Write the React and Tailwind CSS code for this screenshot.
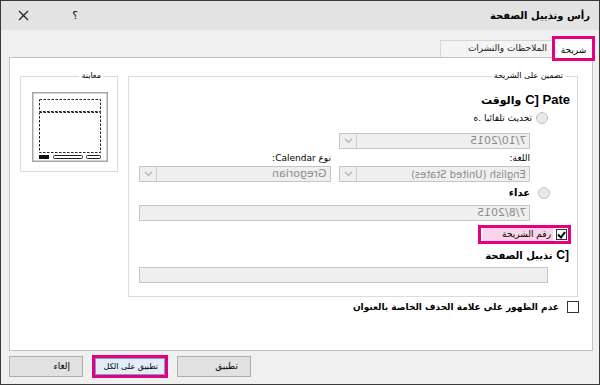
import React from 'react'

function Chevron() {
  return (
    <svg width="9" height="6" viewBox="0 0 9 6">
      <polyline points="1,1 4.5,4.5 8,1" fill="none" stroke="#b4b4b4" strokeWidth="1.2" />
    </svg>
  )
}

function Mirror({ children }) {
  return <span className="inline-block -scale-x-100 whitespace-nowrap">{children}</span>
}

function Combo({ value, className, textSize = 'text-[11px]' }) {
  return (
    <div className={`flex h-[16px] border border-[#c6c6c6] bg-[#efefef] ${className}`}>
      <div className={`flex flex-1 items-center justify-start pr-[3px] text-[#8c8c8c] ${textSize}`}>
        <Mirror>{value}</Mirror>
      </div>
      <div className="flex w-[17px] items-center justify-center border-r border-[#d0d0d0]">
        <Chevron />
      </div>
    </div>
  )
}

function Radio() {
  return <span className="block h-[12px] w-[12px] shrink-0 rounded-full border border-[#c2c2c2] bg-[#e9e9e9]" />
}

function PreviewDrawing() {
  return (
    <svg width="76" height="70" viewBox="0 0 76 70">
      <rect x="0.75" y="0.75" width="74.5" height="68.5" fill="#fff" stroke="#a6a6a6" strokeWidth="1.5" />
      <rect x="7.5" y="7.5" width="61" height="12" fill="none" stroke="#222" strokeWidth="1" strokeDasharray="2.5,1.5" />
      <rect x="7.5" y="20.5" width="61" height="40" fill="none" stroke="#222" strokeWidth="1" strokeDasharray="2.5,1.5" />
      <rect x="7" y="63" width="10" height="4" fill="#111" />
      <rect x="21.5" y="63.5" width="29" height="3" rx="1" fill="none" stroke="#222" strokeWidth="1" />
      <rect x="54.5" y="63.5" width="14" height="3" rx="1" fill="none" stroke="#222" strokeWidth="1" />
    </svg>
  )
}

export default function App() {
  return (
    <div className="flex h-[385px] w-[600px] flex-col overflow-hidden border border-[#3a3a3a] bg-[#f0f0f0] font-['DejaVu_Sans',sans-serif] text-[11px] text-black">
      {/* title bar */}
      <div className="flex h-[29px] items-center justify-between bg-[#e3e3e3] pl-[17px] pr-[9px]">
        <div className="flex w-[60px] items-center justify-between">
          <svg width="11" height="11" viewBox="0 0 11 11">
            <path d="M1 1L10 10M10 1L1 10" stroke="#222" strokeWidth="1.3" />
          </svg>
          <span className="text-[11px] leading-none">؟</span>
        </div>
        <div dir="rtl" className="text-[10px] font-bold">رأس وتذييل الصفحة</div>
      </div>

      <div className="flex flex-1 flex-col pl-[8px] pr-[6px]">
        {/* tabs */}
        <div className="relative z-10 flex h-[27px] items-end justify-end">
          <div dir="rtl" className="flex h-[17px] w-[113px] items-center border border-b-0 border-[#d6d6d6] bg-[#f4f4f4] pr-[5px] text-[9px] text-[#222]">
            الملاحظات والنشرات
          </div>
          <div dir="rtl" className="-mb-[4px] -ml-[1px] -mr-[2px] flex h-[25px] w-[43px] items-start justify-center border-[3px] border-[#e5007d] bg-white pt-[5px] text-[9px]">
            شريحة
          </div>
        </div>

        {/* panel */}
        <div className="flex h-[294px] flex-col border border-[#c4c4c4] bg-white pl-[10px] pr-[13px] pt-[12px]">
          <div className="flex gap-[10px]">
            <fieldset dir="rtl" className="h-[102px] w-[98px] border border-[#dcdcdc] pl-[11px] pr-[9px]">
              <legend className="mr-[5px] px-[2px] text-[8px] leading-[12px]">معاينة</legend>
              <div className="mt-[10px]">
                <PreviewDrawing />
              </div>
            </fieldset>

            <fieldset dir="rtl" className="h-[227px] w-[450px] border border-[#dcdcdc] pl-[9px] pr-[7px]">
              <legend className="mr-[5px] px-[2px] text-[8px] leading-[12px]">تضمين على الشريحة</legend>
              <div className="flex flex-col items-start">
                <div dir="ltr" className="mt-[10px] h-[16px] whitespace-nowrap font-bold leading-[16px]">
                  <span className="text-[11px]">والوقت</span>{' '}
                  <span className="font-['Liberation_Sans',sans-serif] text-[13px]">C] Pate</span>
                </div>

                <div className="mt-[4px] flex h-[12px] items-center">
                  <span className="w-[22px]" />
                  <Radio />
                  <span className="w-[4px]" />
                  <span className="text-[9px] leading-[12px]">تحديث تلقائيا .ه</span>
                </div>

                <Combo value="7/10/2015" className="mt-[9px] mr-[40px] w-[191px]" />

                <div className="mt-[3px] flex h-[12px] items-center">
                  <span className="w-[40px]" />
                  <span className="w-[191px] text-[9px] leading-[12px]">اللغة:</span>
                  <span className="w-[8px]" />
                  <span className="text-[9px] leading-[12px]">نوع Calendar:</span>
                </div>

                <div className="mt-[2px] flex gap-[8px] mr-[40px]">
                  <Combo value="English (United States)" className="w-[191px]" textSize="text-[10px]" />
                  <Combo value="Gregorian" className="w-[192px]" />
                </div>

                <div className="mt-[5px] flex h-[12px] items-center">
                  <span className="w-[20px]" />
                  <Radio />
                  <span className="w-[8px]" />
                  <span className="text-[10px] font-bold leading-[12px]">عداء</span>
                </div>

                <div className="mt-[6px] mr-[40px] flex h-[16px] w-[391px] items-center border border-[#c6c6c6] bg-[#efefef] pr-[3px] text-[11px] text-[#8c8c8c]">
                  <Mirror>7/8/2015</Mirror>
                </div>

                <div className="mt-[4px] -mr-[1px] flex h-[19px] w-[93px] items-center border-[3px] border-[#e5007d] bg-white">
                  <div className="mr-[1px] flex h-[11px] w-[11px] items-center justify-center border border-[#333] bg-white">
                    <svg width="9" height="8" viewBox="0 0 9 8">
                      <polyline points="1,3.5 4,6.5 8,1" fill="none" stroke="#000" strokeWidth="2" />
                    </svg>
                  </div>
                  <div className="ml-[2px] mr-[3px] flex h-full flex-1 items-center bg-[#fbd3ea] pr-[2px] text-[9px] leading-none">
                    رقم الشريحة
                  </div>
                </div>

                <div dir="ltr" className="mt-[4px] mr-[1px] h-[14px] whitespace-nowrap font-bold leading-[14px]">
                  <span className="text-[10px]">تذييل الصفحة</span>{' '}
                  <span className="font-['Liberation_Sans',sans-serif] text-[12px]">C]</span>
                </div>

                <div className="mt-[5px] mr-[22px] h-[16px] w-[409px] border border-[#c6c6c6] bg-[#efefef]" />
              </div>
            </fieldset>
          </div>

          <div dir="rtl" className="mt-[3px] flex items-center">
            <span className="block h-[12px] w-[12px] border border-[#333] bg-white" />
            <span className="w-[8px]" />
            <span className="text-[9px] font-bold leading-[14px]">عدم الظهور على علامة الحذف الخاصة بالعنوان</span>
          </div>
        </div>

        {/* buttons */}
        <div dir="ltr" className="mt-[4px] flex items-center gap-[9px]">
          <button className="flex h-[21px] w-[74px] items-center justify-end border border-[#adadad] bg-[#e1e1e1] pr-[12px] text-[9px]">
            إلغاء
          </button>
          <div className="flex h-[23px] w-[76px] border-[3px] border-[#e5007d]">
            <button className="flex flex-1 items-center justify-end whitespace-nowrap border border-[#7a9fc9] bg-[#e3edf7] pr-[6px] text-[8px]">
              تطبيق على الكل
            </button>
          </div>
          <button className="flex h-[21px] w-[74px] items-center justify-end border border-[#adadad] bg-[#e1e1e1] pr-[12px] text-[9px]">
            تطبيق
          </button>
        </div>
      </div>
    </div>
  )
}
